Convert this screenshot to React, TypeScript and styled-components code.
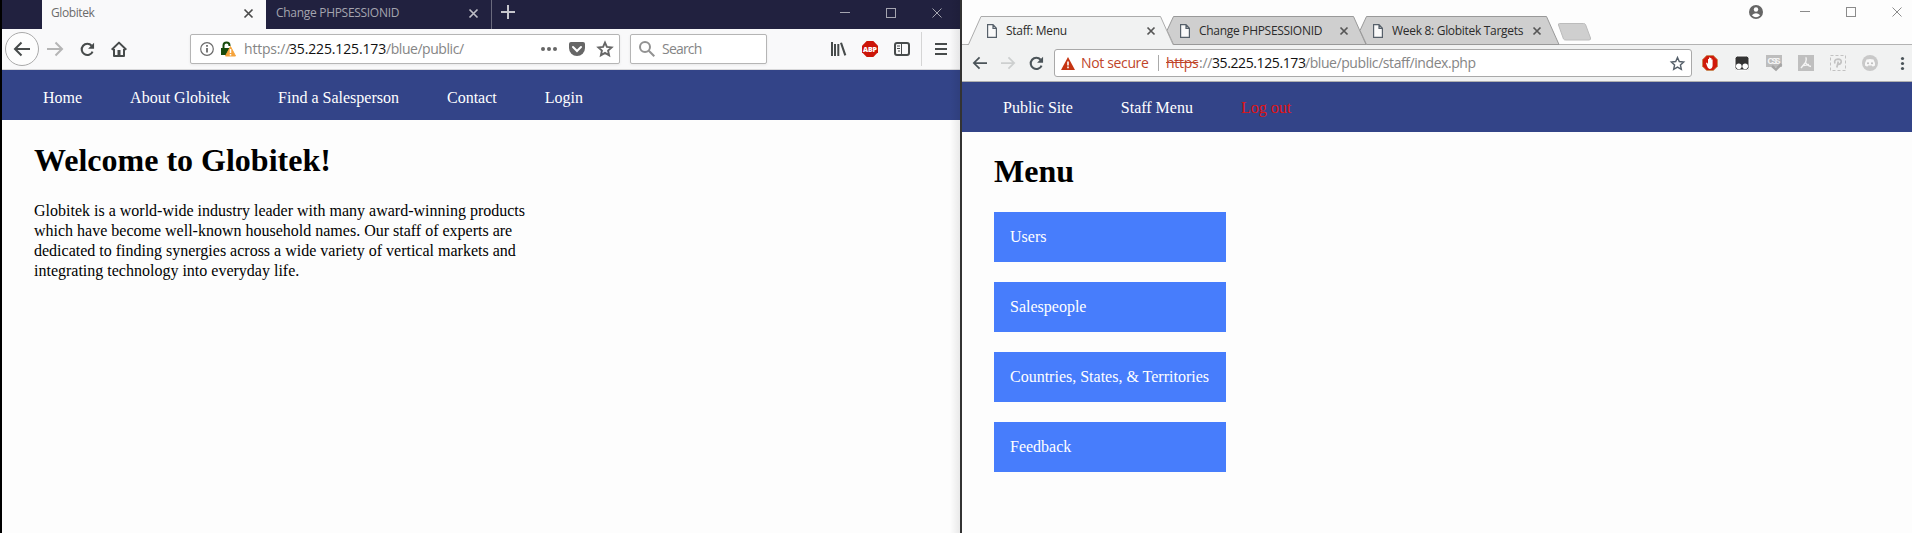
import React from "react";
import styled, { createGlobalStyle } from "styled-components";

const Global = createGlobalStyle`
  * { box-sizing: border-box; }
  html, body { margin: 0; padding: 0; background: #fdfdfd; }
  body { overflow: hidden; }
`;

const ui = `"Open Sans", "Noto Sans", sans-serif`;
const serif = `"Liberation Serif", "Times New Roman", serif`;

const Desktop = styled.div`
  display: grid;
  grid-template-columns: 960px 952px;
  width: 1912px;
  height: 533px;
`;
const Window = styled.section<{ $edge: string }>`
  display: flex;
  flex-direction: column;
  min-width: 0;
  background: #fdfdfd;
  border-left: 2px solid ${(p) => p.$edge};
`;
const LeftFrame = styled.div`
  position: relative;
  display: grid;
`;
const EdgeShadow = styled.div`
  position: absolute;
  top: 0;
  right: 0;
  bottom: 0;
  width: 10px;
  background: linear-gradient(to right, rgba(0, 0, 0, 0), rgba(0, 0, 0, 0.08));
`;

const Row = styled.div<{ $h: number; $pl?: number }>`
  display: flex;
  align-items: center;
  flex: none;
  height: ${(p) => p.$h}px;
  padding-left: ${(p) => p.$pl ?? 0}px;
`;
const Label = styled.span<{ $w: number; $size: number; $color: string; $ls?: number; $ml?: number; $lift?: number }>`
  flex: none;
  width: ${(p) => p.$w}px;
  margin-left: ${(p) => p.$ml ?? 0}px;
  margin-bottom: ${(p) => p.$lift ?? 0}px;
  font: ${(p) => p.$size}px/20px ${ui};
  letter-spacing: ${(p) => p.$ls ?? 0}px;
  color: ${(p) => p.$color};
  white-space: nowrap;
`;
const Icon = styled.svg<{ $ml?: number }>`
  display: block;
  flex: none;
  margin-left: ${(p) => p.$ml ?? 0}px;
  overflow: visible;
`;

const DarkStrip = styled(Row)`
  background: #21213f;
`;
const ActiveTab = styled.div`
  display: flex;
  align-items: center;
  width: 224px;
  height: 29px;
  margin-left: 40px;
  padding: 0 0 3px 9px;
  background: #f9f9fa;
`;
const QuietTab = styled(ActiveTab)`
  width: 226px;
  margin-left: 0;
  padding-left: 10px;
  background: transparent;
  border-right: 1px solid #6a6a7d;
`;
const LightToolbar = styled(Row)`
  background: #f9f9fa;
  border-bottom: 1px solid #d8d8da;
`;
const BackCircle = styled.div`
  display: grid;
  place-items: center;
  width: 34px;
  height: 34px;
  border: 1px solid #aaa;
  border-radius: 50%;
  background: #fdfdfd;
`;
const Field = styled.div<{ $w: number; $ml: number }>`
  display: flex;
  align-items: center;
  flex: none;
  width: ${(p) => p.$w}px;
  height: 30px;
  margin-left: ${(p) => p.$ml}px;
  background: #fff;
  border: 1px solid #b5b5b5;
  border-radius: 2px;
  box-shadow: 0 1px 3px rgba(0, 0, 0, 0.07);
`;
const Divider = styled.div<{ $h: number; $ml: number; $color: string }>`
  flex: none;
  width: 1px;
  height: ${(p) => p.$h}px;
  margin-left: ${(p) => p.$ml}px;
  background: ${(p) => p.$color};
`;

const SiteNav = styled.nav<{ $drop: number }>`
  display: flex;
  align-items: center;
  flex: none;
  gap: 48px;
  height: 50px;
  padding: ${(p) => p.$drop * 2}px 0 0 41px;
  background: #334488;
`;
const NavLink = styled.a<{ $danger?: boolean }>`
  font: 16px/20px ${serif};
  white-space: nowrap;
  color: ${(p) => (p.$danger ? "#e01313" : "#fff")};
`;
const Page = styled.main<{ $top: number }>`
  padding: ${(p) => p.$top}px 0 0 32px;
  color: #000;
`;
const Title = styled.h1`
  margin: 0;
  font: bold 32px/40px ${serif};
`;
const Intro = styled.p`
  width: 500px;
  margin: 21px 0 0;
  font: 16px/20px ${serif};
  color: #000;
`;
const MenuList = styled.div`
  display: grid;
  gap: 20px;
  width: 232px;
  margin-top: 21px;
`;
const MenuItem = styled.a`
  display: flex;
  align-items: center;
  height: 50px;
  padding-left: 16px;
  background: #477dfc;
  color: #fff;
  font: 16px/20px ${serif};
  white-space: nowrap;
`;

const ChromeStrip = styled.div`
  display: flex;
  flex: none;
  height: 45px;
  background: #fdfdfd;
  padding: 16px 0 0 5px;
  border-bottom: 1px solid #b3b3b3;
`;
const ChromeTab = styled.div<{ $active?: boolean }>`
  position: relative;
  z-index: ${(p) => (p.$active ? 2 : 1)};
  display: flex;
  align-items: center;
  width: 193px;
  height: 29px;
  padding-left: 20px;
`;
const TabShape = styled.svg`
  position: absolute;
  left: 0;
  top: 0;
  z-index: -1;
`;
const ChromeControls = styled.div`
  display: flex;
  align-items: center;
  height: 16px;
  margin: -12px 0 0 auto;
  padding-right: 10px;
`;
const ChromeToolbar = styled(Row)`
  background: #f1f2f2;
  border-bottom: 1px solid #b0b0b0;
`;
const Omnibox = styled(Field)`
  height: 28px;
  border-color: #a9a9a9;
  border-radius: 3px;
  box-shadow: none;
`;
const Struck = styled(Label)`
  text-decoration: line-through;
`;

const Cross = ({ ml, color, s = 9, w = 1.7 }: { ml: number; color: string; s?: number; w?: number }) => (
  <Icon $ml={ml} width={s} height={s} viewBox={`0 0 ${s} ${s}`} stroke={color} strokeWidth={w}>
    <path d={`M.5 .5L${s - 0.5} ${s - 0.5}M${s - 0.5} .5L.5 ${s - 0.5}`} />
  </Icon>
);
const WindowButtons = ({ ml, color }: { ml: number; color: string }) => (
  <>
    <Icon $ml={ml} width="10" height="10" stroke={color}>
      <path d="M0 4.5h10" />
    </Icon>
    <Icon $ml={36} width="10" height="10" stroke={color} fill="none">
      <rect x=".5" y=".5" width="9" height="9" />
    </Icon>
    <Cross ml={36} color={color} s={10} w={1} />
  </>
);
const StripControls = styled.div`
  display: flex;
  align-items: center;
  padding-bottom: 3px;
`;
const Arrow = ({ ml = 0, color, flip, s = 16 }: { ml?: number; color: string; flip?: boolean; s?: number }) => (
  <Icon $ml={ml} width={s} height={s} viewBox="0 0 16 16" fill="none" stroke={color} strokeWidth="2">
    <path d={flip ? "M0 8h15M8.5 1.5L15 8l-6.5 6.5" : "M16 8H1M7.5 1.5L1 8l6.5 6.5"} />
  </Icon>
);
const Reload = ({ ml, color }: { ml: number; color: string }) => (
  <Icon $ml={ml} width="15" height="15" viewBox="0 0 16 16" fill="none">
    <path d="M13.4 10.2A6 6 0 1 1 12.4 4" stroke={color} strokeWidth="2.2" />
    <path d="M15 .8v6.4H8.6z" fill={color} />
  </Icon>
);
const Star = ({ ml, color, s, w }: { ml: number; color: string; s: number; w: number }) => (
  <Icon $ml={ml} width={s} height={s} viewBox="0 0 16 16" fill="none" stroke={color} strokeWidth={w}>
    <path d="M8 1.6l1.9 4.3 4.7.5-3.5 3.2 1 4.7L8 11.9l-4.1 2.4 1-4.7L1.4 6.4l4.7-.5z" />
  </Icon>
);
const PageGlyph = () => (
  <Icon width="10" height="14" viewBox="0 0 10 14" fill="#fafafa" stroke="#56606a" strokeWidth="1.2">
    <path d="M.6 .6h5.4l3.4 3.6v9.2H.6zM6 .6v3.8h3.4" />
  </Icon>
);

const AbpIcon = () => (
  <Icon $ml={16} width="16" height="16" viewBox="0 0 16 16">
    <path d="M4.7 0h6.6L16 4.7v6.6L11.3 16H4.7L0 11.3V4.7z" fill="#cc1509" />
    <text x="8" y="10.7" textAnchor="middle" textLength="14" fontFamily="Open Sans" fontWeight="800" fontSize="7" fill="#fff">
      ABP
    </text>
  </Icon>
);

function FirefoxWindow() {
  const dark = "#474b4b";
  return (
    <LeftFrame>
      <Window $edge="#000">
        <DarkStrip $h={29}>
          <ActiveTab>
            <Label $w={193} $size={12} $color="#6b6b6b" $ls={-0.4}>Globitek</Label>
            <Cross ml={0} color="#4b4b4b" />
          </ActiveTab>
          <QuietTab>
            <Label $w={193} $size={12} $color="#a5a5af" $ls={-0.3}>Change PHPSESSIONID</Label>
            <Cross ml={0} color="#bebec6" />
          </QuietTab>
          <StripControls>
            <Icon $ml={9} width="14" height="14" stroke="#c6c6cc" strokeWidth="2">
              <path d="M0 6h14M7 -1v14" />
            </Icon>
            <WindowButtons ml={325} color="#a5a5b0" />
          </StripControls>
        </DarkStrip>
        <LightToolbar $h={41} $pl={3}>
          <BackCircle>
            <Arrow color={dark} />
          </BackCircle>
          <Arrow ml={8} color="#b5b5b5" flip />
          <Reload ml={17} color={dark} />
          <Icon $ml={16} width="16" height="16" viewBox="0 0 16 16" fill="none" stroke={dark} strokeWidth="2">
            <path d="M.7 8.7L8 1.6l7.3 7.1M3 8v7h10V8" strokeLinejoin="round" />
            <rect x="6.5" y="9" width="3" height="6" fill={dark} stroke="none" />
          </Icon>
          <Field $w={430} $ml={63}>
            <Icon $ml={9} width="14" height="14" viewBox="0 0 14 14" fill="none" stroke="#6b6b6b" strokeWidth="1.2">
              <circle cx="7" cy="7" r="6.3" />
              <path d="M7 6v4.6M7 3v1.7" strokeWidth="1.8" />
            </Icon>
            <Icon $ml={7} width="15" height="16" viewBox="0 0 15 16">
              <path d="M2.5 7V4.5a3 3 0 0 1 6 0V5" fill="none" stroke="#174a0b" strokeWidth="2" />
              <path d="M0 7h9v7H0z" fill="#174a0b" />
              <path d="M9.5 5.5l5 9.5h-10z" fill="#f5a33b" stroke="#f5a33b" strokeLinejoin="round" />
              <path d="M9.5 8v4M9.5 13v1.5" stroke="#fff" strokeWidth="1.5" />
            </Icon>
            <Label $ml={8} $w={45} $size={14} $color="#858585" $ls={-0.2}>https://</Label>
            <Label $w={97} $size={14} $color="#111" $ls={-0.15}>35.225.125.173</Label>
            <Label $w={155} $size={14} $color="#858585" $ls={-0.45}>/blue/public/</Label>
            <Icon width="16" height="4" fill="#666">
              <circle cx="2" cy="2" r="2" />
              <circle cx="8" cy="2" r="2" />
              <circle cx="14" cy="2" r="2" />
            </Icon>
            <Icon $ml={12} width="16" height="14" viewBox="0 0 16 14">
              <path d="M2 0h12a2 2 0 0 1 2 2v4a8 8 0 0 1-16 0V2a2 2 0 0 1 2-2z" fill="#666" />
              <path d="M4 5l4 4 4-4" fill="none" stroke="#fff" strokeWidth="2" strokeLinecap="round" />
            </Icon>
            <Star ml={12} color="#666" s={16} w={1.9} />
          </Field>
          <Field $w={137} $ml={10}>
            <Icon $ml={8} width="16" height="16" viewBox="0 0 16 16" fill="none" stroke="#929292" strokeWidth="2">
              <circle cx="6" cy="6" r="5" />
              <path d="M9.8 9.8l5.5 5.5" />
            </Icon>
            <Label $ml={7} $w={60} $size={14} $color="#858585" $ls={-0.8}>Search</Label>
          </Field>
          <Icon $ml={64} width="15" height="14" fill={dark}>
            <path d="M0 0h2v14H0zM3 2h2v12H3zM6.3 2h2v12h-2zM9 1l2-.6L15.3 13l-2 .8z" />
          </Icon>
          <AbpIcon />
          <Icon $ml={16} width="16" height="14" fill="none" stroke={dark}>
            <rect x="1" y="1" width="14" height="12" rx="2" strokeWidth="2" />
            <path d="M7.5 1v12M3 4h3M3 6.5h3M4 9h2" />
          </Icon>
          <Divider $h={34} $ml={11} $color="#d5d5d5" />
          <Icon $ml={13} width="12" height="12" stroke={dark} strokeWidth="2">
            <path d="M0 1h12M0 6h12M0 11h12" />
          </Icon>
        </LightToolbar>
        <SiteNav $drop={3}>
          <NavLink>Home</NavLink>
          <NavLink>About Globitek</NavLink>
          <NavLink>Find a Salesperson</NavLink>
          <NavLink>Contact</NavLink>
          <NavLink>Login</NavLink>
        </SiteNav>
        <Page $top={20}>
          <Title>Welcome to Globitek!</Title>
          <Intro>
            Globitek is a world-wide industry leader with many award-winning products
            <br />
            which have become well-known household names. Our staff of experts are
            <br />
            dedicated to finding synergies across a wide variety of vertical markets and
            <br />
            integrating technology into everyday life.
          </Intro>
        </Page>
      </Window>
      <EdgeShadow />
    </LeftFrame>
  );
}

const tabs = ["Staff: Menu", "Change PHPSESSIONID", "Week 8: Globitek Targets"];

function ChromeWindow() {
  const dark = "#4b5459";
  return (
    <Window $edge="#333">
      <ChromeStrip>
        {tabs.map((t, i) => (
          <ChromeTab key={t} $active={i === 0}>
            <TabShape width="207" height="30" fill={i ? "#cfcfcf" : "#f1f2f2"} stroke={i ? "#999" : "#ababab"}>
              <path
                d={i ? "M7 14.5L13.5 .5H193.5L206 28.5H13.5L7 14.5" : "M0 28.5H1.5L14 .5H193.5L206 28.5"}
              />
              {i === 0 && <path d="M2 28H205.5V30H2z" stroke="none" />}
            </TabShape>
            <PageGlyph />
            <Label $ml={9} $w={141} $size={12} $color="#2b2b2b" $ls={-0.3}>{t}</Label>
            <Cross ml={0} color="#565656" s={8} />
          </ChromeTab>
        ))}
        <Icon $ml={11} width="36" height="29" fill="#cfcfcf" stroke="#bcbcbc">
          <path d="M2.5 7.5h24q1.5 0 2 1l5 13.5q.5 2-1.5 2h-23q-2 0-2.500-1L1.5 9q-.5-1.5 1-1.5z" />
        </Icon>
        <ChromeControls>
          <Icon width="14" height="14" viewBox="0 0 14 14">
            <circle cx="7" cy="7" r="7" fill="#666" />
            <circle cx="7" cy="4.5" r="2.2" fill="#fff" />
            <path d="M2.8 10.3q4.2-4 8.4 0-4.2 4-8.4 0" fill="#fff" />
          </Icon>
          <WindowButtons ml={37} color="#8b8b8b" />
        </ChromeControls>
      </ChromeStrip>
      <ChromeToolbar $h={37} $pl={11}>
        <Arrow color={dark} s={14} />
        <Arrow ml={14} color="#cdcfcf" s={14} flip />
        <Reload ml={14} color={dark} />
        <Omnibox $w={638} $ml={10}>
          <Icon $ml={6} width="14" height="13" viewBox="0 0 14 13">
            <path d="M7 0l7 13H0z" fill="#c53412" />
            <path d="M7 4.5v4M7 9.5v1.8" stroke="#fff" strokeWidth="1.6" />
          </Icon>
          <Label $ml={6} $w={77} $size={14} $color="#c0452a" $ls={-0.35}>Not secure</Label>
          <Divider $h={16} $ml={0} $color="#aaa" />
          <Struck $ml={7} $w={33} $size={14} $color="#c0452a" $ls={-0.3}>https</Struck>
          <Label $w={13} $size={14} $color="#858585" $ls={-0.3}>://</Label>
          <Label $w={93} $size={14} $color="#111" $ls={-0.4}>35.225.125.173</Label>
          <Label $w={365} $size={14} $color="#858585" $ls={-0.43}>/blue/public/staff/index.php</Label>
          <Star ml={0} color="#56606a" s={15} w={1.5} />
        </Omnibox>
        <Icon $ml={10} width="16" height="16" viewBox="0 0 16 16">
          <path d="M4.7 .5h6.6l4.2 4.2v6.6l-4.2 4.2H4.7L.5 11.3V4.7z" fill="#d01a0b" stroke="#c98a5a" />
          <path d="M4 8l1-.5 1 1.5V4h1v3.5V2.5h1.2v5V3h1.2v5V4.500h1.2V11q-.5 3-3 3Q6 14 5 11z" fill="#fff" />
        </Icon>
        <Icon $ml={16} width="16" height="16">
          <rect x="1" y="1" width="14" height="14" rx="2.5" fill="#333" stroke="#fff" />
          <circle cx="4.8" cy="11.2" r="2.8" fill="#fff" />
          <circle cx="11.2" cy="11.2" r="2.8" fill="#fff" />
        </Icon>
        <Icon $ml={16} width="16" height="16" viewBox="0 0 16 16">
          <path d="M0 0h16v12H0z" fill="#bdbdbd" />
          <text x="8" y="9" textAnchor="middle" textLength="13" fontFamily="Liberation Sans" fontSize="8.5" fontWeight="bold" fill="#f7f7f7">CSS</text>
          <path d="M6 11l4 3.5 5.5-5.5" fill="none" stroke="#a5a5a5" strokeWidth="2.5" />
        </Icon>
        <Icon $ml={16} width="16" height="16" viewBox="0 0 16 16">
          <path d="M0 0h16v16H0z" fill="#bfbfbf" />
          <path d="M7.5 2.5Q9 3 7.5 7.5L3 13M7.5 7.5Q9 10.5 13 11.5M5.5 10.5L11 9.5" fill="none" stroke="#f4f4f4" strokeWidth="1.4" />
        </Icon>
        <Icon $ml={16} width="16" height="16" viewBox="0 0 16 16" fill="none" stroke="#c2c2c2">
          <rect x=".5" y=".5" width="15" height="15" strokeDasharray="3 2" />
          <path d="M5 8.5Q3.5 4.5 8 4.2q3.5 0 3.2 2.8-.5 2.5-3.2 2.3M8.3 6.5L6.8 12.5" strokeWidth="1.7" />
        </Icon>
        <Icon $ml={16} width="16" height="16" viewBox="0 0 16 16">
          <circle cx="8" cy="8" r="8" fill="#c9c9c9" />
          <path d="M4.5 4.5q3.5-1 7 0 1.8 3 1.5 6-1.5 1.2-2.5 1l-.7-1H6.2l-.7 1q-1 .2-2.5-1-.3-3 1.5-6z" fill="#f7f7f7" />
          <circle cx="6" cy="8.2" r="1" fill="#bbb" />
          <circle cx="10" cy="8.2" r="1" fill="#bbb" />
        </Icon>
        <Icon $ml={23} width="4" height="14" fill={dark}>
          <circle cx="1.5" cy="2.5" r="1.6" />
          <circle cx="1.5" cy="7.5" r="1.6" />
          <circle cx="1.5" cy="12.5" r="1.6" />
        </Icon>
      </ChromeToolbar>
      <SiteNav $drop={1}>
        <NavLink>Public Site</NavLink>
        <NavLink>Staff Menu</NavLink>
        <NavLink $danger>Log out</NavLink>
      </SiteNav>
      <Page $top={19}>
        <Title>Menu</Title>
        <MenuList>
          <MenuItem>Users</MenuItem>
          <MenuItem>Salespeople</MenuItem>
          <MenuItem>Countries, States, &amp; Territories</MenuItem>
          <MenuItem>Feedback</MenuItem>
        </MenuList>
      </Page>
    </Window>
  );
}

export default function App() {
  return (
    <>
      <Global />
      <Desktop>
        <FirefoxWindow />
        <ChromeWindow />
      </Desktop>
    </>
  );
}
